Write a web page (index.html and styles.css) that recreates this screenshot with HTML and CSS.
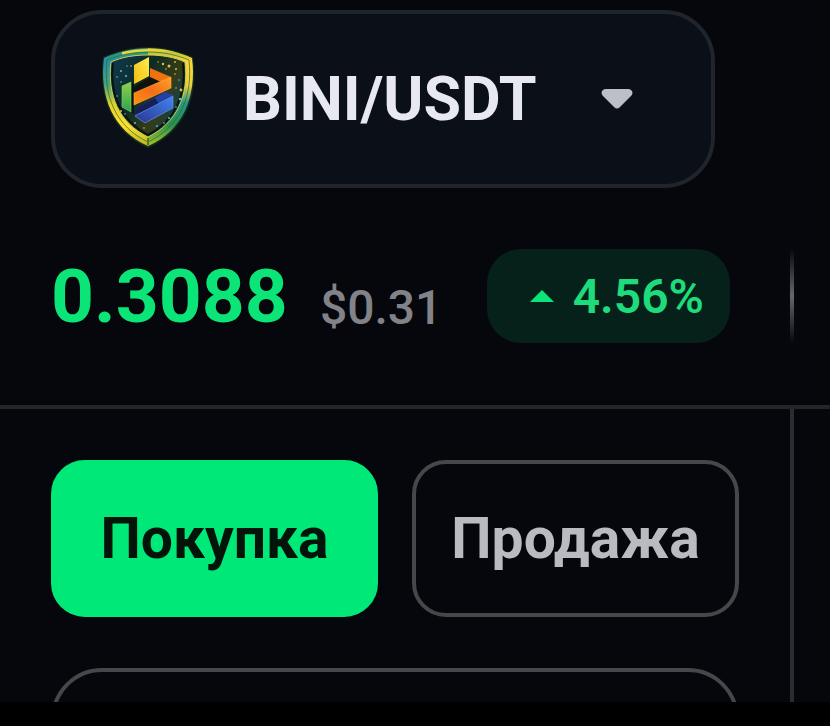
FILE: index.html
```html
<!DOCTYPE html>
<html lang="ru">
<head>
    <meta charset="UTF-8">
    <meta name="viewport" content="width=device-width, initial-scale=1.0">
    <title>BINI/USDT</title>
    <link rel="stylesheet" href="styles.css">
</head>
<body>

    <!-- Пара и текущая цена -->
    <header class="market">
        <button class="pair-select" type="button">
            <svg class="pair-logo" viewBox="0 0 102 110" aria-hidden="true">
                <defs>
                    <linearGradient id="rimLeft" x1="0" y1="0" x2="0" y2="1">
                        <stop offset="0" stop-color="#2f9a6a"/>
                        <stop offset=".15" stop-color="#2a8fa6"/>
                        <stop offset=".38" stop-color="#4aa37a"/>
                        <stop offset=".58" stop-color="#e6d22c"/>
                        <stop offset=".8" stop-color="#ffdf30"/>
                        <stop offset="1" stop-color="#b9b326"/>
                    </linearGradient>
                    <linearGradient id="rimRight" x1="0" y1="0" x2="0" y2="1">
                        <stop offset="0" stop-color="#a8bb38"/>
                        <stop offset=".14" stop-color="#ffd53c"/>
                        <stop offset=".38" stop-color="#f0cf3c"/>
                        <stop offset=".56" stop-color="#25958a"/>
                        <stop offset=".78" stop-color="#279052"/>
                        <stop offset="1" stop-color="#a9c424"/>
                    </linearGradient>
                    <linearGradient id="field" x1="0" y1="0" x2="1" y2=".6">
                        <stop offset="0" stop-color="#123b52"/>
                        <stop offset=".45" stop-color="#0b2b26"/>
                        <stop offset=".75" stop-color="#353c17"/>
                        <stop offset="1" stop-color="#0d4052"/>
                    </linearGradient>
                    <linearGradient id="yellow" x1="0" y1="1" x2="1" y2="0">
                        <stop offset="0" stop-color="#f2b90f"/>
                        <stop offset="1" stop-color="#ffee50"/>
                    </linearGradient>
                    <linearGradient id="orange" x1="0" y1="1" x2="1" y2="0">
                        <stop offset="0" stop-color="#ff9412"/>
                        <stop offset=".5" stop-color="#f56c18"/>
                        <stop offset="1" stop-color="#ffa32c"/>
                    </linearGradient>
                    <linearGradient id="green" x1="0" y1="0" x2="0" y2="1">
                        <stop offset="0" stop-color="#8fd24c"/>
                        <stop offset="1" stop-color="#2ca152"/>
                    </linearGradient>
                    <linearGradient id="blue" x1="0" y1="1" x2="1" y2="0">
                        <stop offset="0" stop-color="#2a3390"/>
                        <stop offset="1" stop-color="#4285ee"/>
                    </linearGradient>
                </defs>
                <!-- щит -->
                <path d="M51 3C36 3 20 7 6 13C1 52 14 88 51 104C88 88 102 52 96 13C82 7 66 3 51 3Z" fill="#1c4a1f" opacity=".5"/>
                <path d="M51 4C36 4 20 8 7 14C2 52 16 87 51 102Z" fill="url(#rimLeft)"/>
                <path d="M51 4C66 4 82 8 95 14C100 52 86 87 51 102Z" fill="url(#rimRight)"/>
                <path d="M25 8C42 4 62 4 78 8C62 7 40 7 25 11Z" fill="#ecd542"/>
                <path d="M51 8C36 8 22 11 10 16C6 52 19 83 51 98C83 83 96 52 92 16C80 11 66 8 51 8Z" fill="none" stroke="#2a6a2c" stroke-width=".7"/>
                <path d="M51 11C37 11 25 13 14 18C10 51 22 79 51 93C80 79 92 51 88 18C77 13 65 11 51 11Z" fill="url(#field)" stroke="#c9cf52" stroke-width="1"/>
                <path d="M51 94V101" stroke="#557b18" stroke-width="2"/>
                <path d="M16 19C12 50 24 77 51 91C78 77 90 50 86 19" fill="none" stroke="#071510" stroke-width="2"/>

                <!-- искры -->
                <g fill="#5fc0d8">
                    <circle cx="24" cy="27" r="1"/><circle cx="30" cy="22" r=".7"/>
                    <circle cx="20" cy="33" r=".8"/><circle cx="29" cy="32" r="1"/>
                    <circle cx="24" cy="38" r=".8"/><circle cx="20" cy="52" r=".8"/>
                    <circle cx="83" cy="55" r="1.2"/><circle cx="79" cy="63" r=".8"/>
                    <circle cx="72" cy="74" r="1"/><circle cx="60" cy="82" r=".9"/>
                    <circle cx="38" cy="79" r="1"/><circle cx="28" cy="70" r=".8"/>
                    <circle cx="82" cy="36" r=".8"/><circle cx="79" cy="44" r=".8"/>
                </g>
                <g fill="#f0bc3a">
                    <circle cx="66" cy="20" r="1.2"/><circle cx="72" cy="22" r="1.5"/>
                    <circle cx="78" cy="18" r=".9"/><circle cx="69" cy="25" r=".8"/>
                    <circle cx="79" cy="25" r="1"/><circle cx="61" cy="18" r=".7"/>
                    <circle cx="84" cy="46" r="1.4"/><circle cx="78" cy="30" r=".8"/>
                    <circle cx="24" cy="67" r="1"/><circle cx="47" cy="84" r=".8"/>
                    <circle cx="34" cy="22" r=".8"/><circle cx="67" cy="79" r=".8"/>
                </g>

                <!-- ленты -->
                <path d="M34 38L37 40V70L34 68Z" fill="#06170f"/>
                <path d="M25 42L34 38V68L25 63Z" fill="url(#green)" stroke="#8ed45c" stroke-width=".6"/>
                <path d="M38 65L68 48L76 51V56L38 73Z" fill="#2240a8"/>
                <path d="M38 65L58 54L62 60L38 71Z" fill="#171f58"/>
                <path d="M38 72L76 52V64L48 79Z" fill="url(#blue)" stroke="#6a9cf0" stroke-width=".6"/>
                <path d="M37 43L53 33L66 36L37 50Z" fill="#10110d"/>
                <path d="M53 24L74 33V37L66 39L53 33Z" fill="#f0720f"/>
                <path d="M37 49L74 33V44L37 61Z" fill="url(#orange)" stroke="#ffb13f" stroke-width=".6"/>
                <path d="M37 21L52 13V32L37 40Z" fill="url(#yellow)"/>
                <path d="M37 40L45 27L52 32Z" fill="#ffd51f" opacity=".6"/>
            </svg>
            <span class="pair-name">BINI/USDT</span>
            <svg class="pair-arrow" viewBox="0 0 32 20" aria-hidden="true">
                <path d="M5 0H27C31 0 33 4 30 7L19 18Q16 21 13 18L2 7C-1 4 1 0 5 0Z"/>
            </svg>
        </button>

        <div class="quote">
            <span class="price">0.3088</span>
            <span class="price-usd">$0.31</span>
            <span class="change">
                <svg class="change-arrow" viewBox="0 0 24 12" aria-hidden="true"><path d="M0 12L12 0L24 12Z"/></svg>
                4.56%
            </span>
            <span class="quote-divider"></span>
        </div>
    </header>

    <!-- Форма ордера -->
    <main class="trade">
        <form class="order-form">
            <div class="side-switch">
                <button class="side-button side-buy" type="button">Покупка</button>
                <button class="side-button side-sell" type="button">Продажа</button>
            </div>
            <input class="order-field" type="text" aria-label="Цена">
        </form>
    </main>

    <footer class="bottom-bar"></footer>

</body>
</html>
```
FILE: styles.css
```css
* {
    box-sizing: border-box;
}

body {
    margin: 0;
    height: 100vh;
    display: flex;
    flex-direction: column;
    overflow: hidden;
    background: #06070c;
    color: #e8e9f0;
    font-family: Roboto, "Liberation Sans", sans-serif;
}

button,
input {
    font: inherit;
    color: inherit;
}

button {
    cursor: pointer;
}

/* Пара и цена */
.market {
    padding: 10px 0 62px 51px;
    border-bottom: 4px solid #242529;
}

.pair-select {
    display: flex;
    align-items: center;
    height: 178px;
    padding: 0 78px 0 42px;
    border: 4px solid #20242b;
    border-radius: 51px;
    background: #0b0f17;
}

.pair-logo {
    width: 102px;
    height: 110px;
    margin-right: 44px;
}

.pair-name {
    font-size: 61px;
    font-weight: 700;
    line-height: 72px;
}

.pair-arrow {
    width: 32px;
    height: 20px;
    margin-left: 64px;
    fill: #bcbec8;
}

.quote {
    display: flex;
    align-items: center;
    height: 94px;
    margin-top: 61px;
    padding-right: 36px;
}

.price {
    color: #0be578;
    font-size: 75px;
    font-weight: 700;
}

.price-usd {
    margin: 22px 0 0 32px;
    color: #828388;
    font-size: 48px;
    font-weight: 500;
}

.change {
    display: flex;
    align-items: center;
    gap: 19px;
    height: 94px;
    margin-left: auto;
    padding: 0 26px 0 43px;
    border-radius: 34px;
    background: #06211a;
    color: #1edb7b;
    font-size: 48px;
    font-weight: 600;
}

.change-arrow {
    width: 24px;
    height: 12px;
    fill: #0be578;
}

.quote-divider {
    width: 4px;
    height: 94px;
    margin-left: 60px;
    background: linear-gradient(transparent, #66676c, transparent);
}

/* Форма ордера */
.trade {
    flex: 1;
    min-height: 0;
    padding-right: 36px;
    overflow: hidden;
}

.order-form {
    height: 100%;
    padding: 51px 51px 0;
    border-right: 4px solid #2b2c31;
}

.side-switch {
    display: flex;
    gap: 34px;
}

.side-button {
    flex: 1;
    height: 157px;
    padding: 0;
    border: 4px solid #46474b;
    border-radius: 34px;
    background: transparent;
    color: #babbc1;
    font-size: 57px;
    font-weight: 700;
}

.side-buy {
    border-color: #00e878;
    background: #00e878;
    color: #03150b;
}

.order-field {
    display: block;
    width: 100%;
    height: 170px;
    margin-top: 51px;
    padding: 0 43px;
    border: 4px solid #46474b;
    border-radius: 51px;
    background: transparent;
    font-size: 48px;
}

.bottom-bar {
    flex: none;
    height: 24px;
    background: #000;
}
```
